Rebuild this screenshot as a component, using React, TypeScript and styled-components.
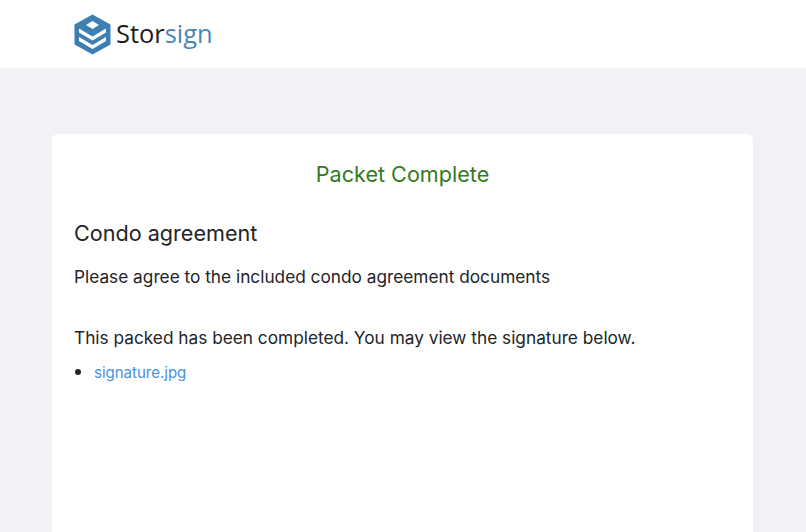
import React from "react";
import styled, { createGlobalStyle } from "styled-components";

const GlobalStyle = createGlobalStyle`
  html, body {
    margin: 0;
    padding: 0;
    height: 100%;
    overflow: hidden;
    background: #f0f2f6;
    font-family: Inter, "Liberation Sans", sans-serif;
    color: #2b2d30;
  }
`;

const Page = styled.div`
  height: 532px;
  overflow: hidden;
`;

const Header = styled.header`
  height: 68px;
  padding-left: 74px;
  background: #fff;
  display: flex;
  align-items: center;
  gap: 5px;
`;

const LogoText = styled.div`
  font-family: "Open Sans", sans-serif;
  font-size: 25.4px;
  line-height: 1;
  color: #1b1b1d;
`;

const LogoAccent = styled.span`
  color: #4a86b5;
`;

const Card = styled.main`
  margin: 66px 53px 0 52px;
  height: 420px;
  padding: 27px 22px;
  background: #fff;
  border-radius: 6px;
`;

const Status = styled.h2`
  margin: 0 0 32px;
  text-align: center;
  font-size: 21.6px;
  line-height: 27px;
  font-weight: 400;
  color: #357a22;
`;

const Title = styled.h1`
  margin: 0 0 17px;
  font-size: 21.6px;
  line-height: 27px;
  font-weight: 400;
  color: #222427;
`;

const Text = styled.p`
  margin: 0;
  font-size: 17.25px;
  line-height: 26px;
  font-weight: 400;
  color: #222427;
`;

const Description = styled(Text)`
  margin-bottom: 35px;
`;

const Files = styled.ul`
  margin: 10px 0 0;
  padding-left: 20px;
  font-size: 15px;
  line-height: 22px;

  li::marker {
    font-size: 19px;
    color: #222427;
  }
`;

const FileLink = styled.a`
  color: #4a90e2;
  text-decoration: none;
`;

const Logo = () => (
  <svg width="37" height="41" viewBox="0 0 37 41" aria-hidden="true">
    <path fill="#3b7fb3" d="M18.500 0.500 36.500 10.500V30.500L18.500 40.500 0.500 30.500V10.500Z" />
    <path fill="#fff" d="M18.500 7 25 11 18.500 15 12 11Z" />
    <path fill="#fff" d="M5 14.500 18.500 22.500 32 14.500V18.500L18.500 26.500 5 18.500Z" />
    <path fill="#fff" d="M5 23 18.500 31 32 23V27L18.500 35 5 27Z" />
  </svg>
);

const App = () => (
  <Page>
    <GlobalStyle />
    <Header>
      <Logo />
      <LogoText>
        Stor<LogoAccent>sign</LogoAccent>
      </LogoText>
    </Header>
    <Card>
      <Status>Packet Complete</Status>
      <Title>Condo agreement</Title>
      <Description>Please agree to the included condo agreement documents</Description>
      <Text>This packed has been completed. You may view the signature below.</Text>
      <Files>
        <li>
          <FileLink href="#">signature.jpg</FileLink>
        </li>
      </Files>
    </Card>
  </Page>
);

export default App;
